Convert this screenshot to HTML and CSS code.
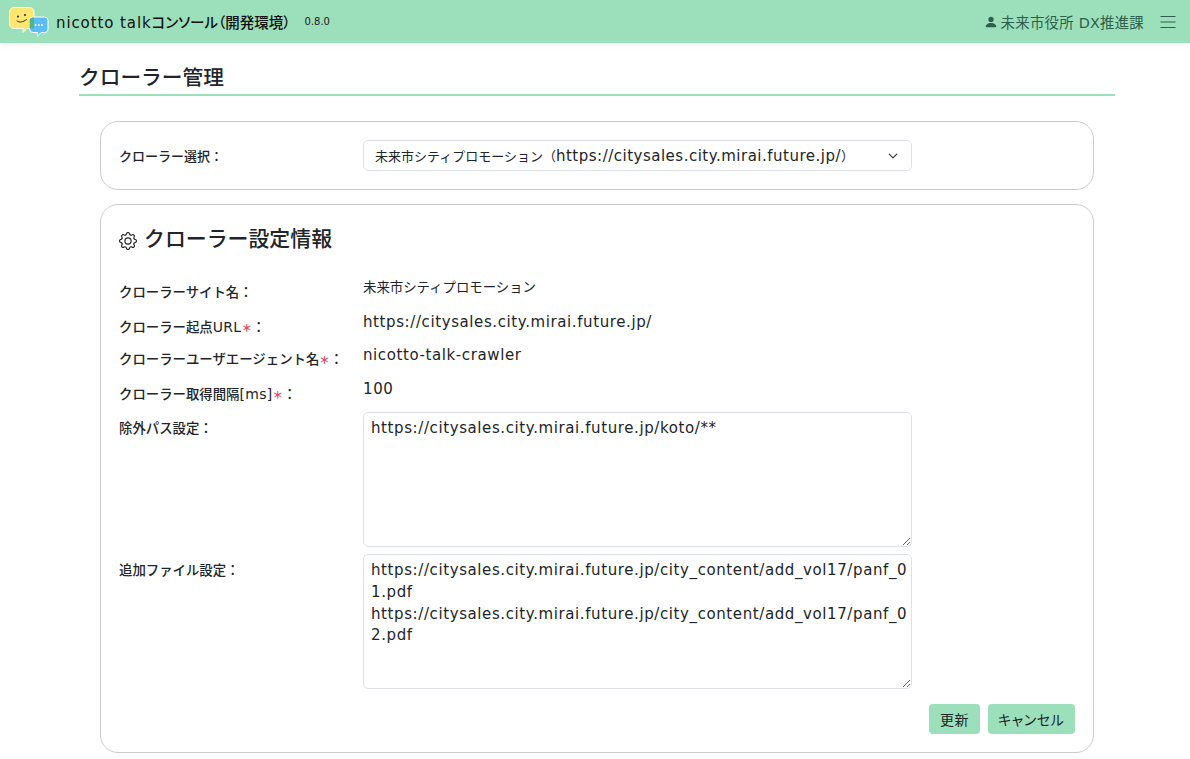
FILE: index.html
```html
<!DOCTYPE html>
<html lang="ja">
  <head>
    <meta charset="UTF-8" />
    <meta name="viewport" content="width=device-width, initial-scale=1.0" />
    <title>クローラー管理</title>
    <link rel="stylesheet" href="styles.css">
  </head>

  <body>
    <header class="navbar">
      <div class="brand">
        <svg class="logo" width="42" height="34" viewBox="8 4.500 42 34">
          <path d="M14 7h15.500a4.500 4.500 0 0 1 4.500 4.500v12a4.500 4.500 0 0 1-4.500 4.500H27l-4 4 .5-4H14a4.500 4.500 0 0 1-4.500-4.500v-12A4.500 4.500 0 0 1 14 7z" fill="#ffe66e" stroke="#fff" stroke-width="1"/>
          <path d="M33 16.500h11.500a3.500 3.500 0 0 1 3.500 3.500v8.500a3.500 3.500 0 0 1-3.500 3.500H41l-3.500 4 .2-4H33a3.500 3.500 0 0 1-3.500-3.500V20a3.500 3.500 0 0 1 3.500-3.500z" fill="#5cbdf5" stroke="#fff" stroke-width="1"/>
          <path d="M33 17H34v11h-4.500v-8a3.500 3.500 0 0 1 3.500-3z" fill="#4fb487"/>
          <circle cx="18" cy="16" r="1.100" fill="#333"/>
          <circle cx="25" cy="14.500" r="1.100" fill="#333"/>
          <path d="M17 20.500c2.500 1.800 6 1.300 9.500-1.500" fill="none" stroke="#333" stroke-width="1" stroke-linecap="round"/>
          <circle cx="35.500" cy="24.500" r=".9" fill="#fff"/>
          <circle cx="38.800" cy="24.500" r=".9" fill="#fff"/>
          <circle cx="42" cy="24.500" r=".9" fill="#fff"/>
        </svg>
        <span class="brand-name"><span class="brand-latin">nicotto talk</span>コンソール（開発環境）</span>
        <span class="version">0.8.0</span>
      </div>
      <div class="nav-right">
        <svg class="user-icon" width="14" height="14" viewBox="0 0 16 16" fill="#2f5f4c">
          <path d="M3 14s-1 0-1-1 1-4 6-4 6 3 6 4-1 1-1 1H3zm5-6a3 3 0 1 0 0-6 3 3 0 0 0 0 6z"/>
        </svg>
        <span class="org">未来市役所 DX推進課</span>
        <svg class="menu-icon" width="16" height="14" viewBox="0 0 16 14" stroke="#2f5f4c" stroke-width="1.200">
          <path d="M0.500 1.500h15M0.500 7h15M0.500 12.500h15"/>
        </svg>
      </div>
    </header>

    <main class="content">
      <h1 class="page-title">クローラー管理</h1>

      <section class="card select-card">
        <div class="row">
          <label class="field-label narrow">クローラー選択：</label>
          <div class="select">
            <span>未来市シティプロモーション（<span class="url">https://citysales.city.mirai.future.jp/</span>）</span>
            <svg width="10" height="10" viewBox="0 0 16 16" fill="none" stroke="#343a40" stroke-width="2" stroke-linecap="round" stroke-linejoin="round">
              <path d="M2 5l6 6 6-6"/>
            </svg>
          </div>
        </div>
      </section>

      <section class="card settings-card">
        <h2 class="card-title">
          <svg width="18" height="18" viewBox="0 0 16 16" fill="#222">
            <path d="M8 4.754a3.246 3.246 0 1 0 0 6.492 3.246 3.246 0 0 0 0-6.492zM5.754 8a2.246 2.246 0 1 1 4.492 0 2.246 2.246 0 0 1-4.492 0z"/>
            <path d="M9.796 1.343c-.527-1.79-3.065-1.79-3.592 0l-.094.319a.873.873 0 0 1-1.255.52l-.292-.16c-1.64-.892-3.433.902-2.54 2.541l.159.292a.873.873 0 0 1-.52 1.255l-.319.094c-1.79.527-1.79 3.065 0 3.592l.319.094a.873.873 0 0 1 .52 1.255l-.16.292c-.892 1.64.901 3.434 2.541 2.54l.292-.159a.873.873 0 0 1 1.255.52l.094.319c.527 1.79 3.065 1.79 3.592 0l.094-.319a.873.873 0 0 1 1.255-.52l.292.16c1.64.893 3.434-.902 2.54-2.541l-.159-.292a.873.873 0 0 1 .52-1.255l.319-.094c1.79-.527 1.79-3.065 0-3.592l-.319-.094a.873.873 0 0 1-.52-1.255l.16-.292c.893-1.64-.902-3.433-2.541-2.54l-.292.159a.873.873 0 0 1-1.255-.52l-.094-.319zm-2.633.283c.246-.835 1.428-.835 1.674 0l.094.319a1.873 1.873 0 0 0 2.693 1.115l.291-.16c.764-.415 1.6.42 1.184 1.185l-.159.292a1.873 1.873 0 0 0 1.116 2.692l.318.094c.835.246.835 1.428 0 1.674l-.319.094a1.873 1.873 0 0 0-1.115 2.693l.16.291c.415.764-.42 1.6-1.185 1.184l-.291-.159a1.873 1.873 0 0 0-2.693 1.116l-.094.318c-.246.835-1.428.835-1.674 0l-.094-.319a1.873 1.873 0 0 0-2.692-1.115l-.292.16c-.764.415-1.6-.42-1.184-1.185l.159-.291A1.873 1.873 0 0 0 1.945 8.930l-.319-.094c-.835-.246-.835-1.428 0-1.674l.319-.094A1.873 1.873 0 0 0 3.060 4.377l-.16-.292c-.415-.764.42-1.6 1.185-1.184l.292.159a1.873 1.873 0 0 0 2.692-1.115l.094-.319z"/>
          </svg>
          <span>クローラー設定情報</span>
        </h2>

        <div class="info-row">
          <label class="field-label">クローラーサイト名：</label>
          <div class="info-value small">未来市シティプロモーション</div>
        </div>
        <div class="info-row">
          <label class="field-label">クローラー起点<span class="label-latin">URL</span><span class="req">＊</span>：</label>
          <div class="info-value">https://citysales.city.mirai.future.jp/</div>
        </div>
        <div class="info-row">
          <label class="field-label">クローラーユーザエージェント名<span class="req">＊</span>：</label>
          <div class="info-value">nicotto-talk-crawler</div>
        </div>
        <div class="info-row">
          <label class="field-label">クローラー取得間隔<span class="label-latin">[ms]</span><span class="req">＊</span>：</label>
          <div class="info-value">100</div>
        </div>
        <div class="area-row">
          <label class="field-label">除外パス設定：</label>
          <textarea class="area" spellcheck="false">https://citysales.city.mirai.future.jp/koto/**</textarea>
        </div>
        <div class="area-row">
          <label class="field-label">追加ファイル設定：</label>
          <textarea class="area" spellcheck="false">https://citysales.city.mirai.future.jp/city_content/add_vol17/panf_01.pdf
https://citysales.city.mirai.future.jp/city_content/add_vol17/panf_02.pdf</textarea>
        </div>
        <div class="actions">
          <button class="btn">更新</button>
          <button class="btn">キャンセル</button>
        </div>
      </section>
    </main>
  </body>
</html>
```

FILE: styles.css
```css
* {
  box-sizing: border-box;
}
html, body {
  height: 759px;
  overflow: hidden;
}
body {
  margin: 0;
  background-color: white;
  color: #212529;
  font-family: "DejaVu Sans", "Noto Sans CJK JP", sans-serif;
  font-size: 14px;
}
.navbar {
  display: flex;
  justify-content: space-between;
  align-items: center;
  height: 43px;
  padding: 0 14px 0 8px;
  background-color: #9cdfbb;
  box-shadow: 0 2px 6px rgba(0, 0, 0, 0.06);
}
.brand {
  display: flex;
  align-items: center;
}
.brand-name {
  margin-left: 6px;
  font-size: 14.500px;
  font-weight: 500;
  font-feature-settings: "palt";
  color: #111;
}
.brand-latin {
  font-size: 15px;
  letter-spacing: 0.9px;
}
.version {
  margin-left: 14px;
  font-size: 10px;
  color: #222;
}
.nav-right {
  display: flex;
  align-items: center;
  color: #2f5f4c;
}
.org {
  margin-left: 3px;
  font-size: 14.400px;
  letter-spacing: 0.25px;
}
.menu-icon {
  margin-left: 16px;
}
.content {
  width: 1036px;
  margin-left: 79px;
  padding-top: 21px;
}
.page-title {
  margin: 0 0 25px;
  height: 32px;
  border-bottom: 2px solid #9cdfbb;
  font-size: 20.700px;
  font-weight: 500;
  line-height: 28px;
}
.card {
  width: 994px;
  margin-left: 21px;
  border: 1px solid #ccc;
  border-radius: 18px;
}
.select-card {
  height: 69px;
  padding: 18px;
}
.row {
  display: flex;
  align-items: center;
}
.field-label {
  display: block;
  width: 244px;
  flex: none;
  font-size: 13.400px;
  font-weight: 500;
  color: #212529;
}
.field-label.narrow {
  font-size: 13px;
}
.label-latin {
  font-size: 14px;
  letter-spacing: 0.3px;
}
.select {
  display: flex;
  justify-content: space-between;
  align-items: center;
  width: 549px;
  height: 31px;
  padding: 0 13px 0 11px;
  border: 1px solid #dee2e6;
  border-radius: 5px;
  font-size: 13px;
}
.url {
  font-size: 15px;
  letter-spacing: 0.5px;
}
.settings-card {
  height: 549px;
  margin-top: 14px;
  padding: 18px;
}
.card-title {
  display: flex;
  align-items: center;
  gap: 7px;
  margin: 0 0 32px;
  height: 28px;
  font-size: 20.900px;
  font-weight: 500;
}
.card-title svg {
  margin-top: 8px;
}
.info-row {
  display: flex;
  height: 33.600px;
  line-height: 20px;
}
.info-value {
  font-size: 15px;
  letter-spacing: 0.6px;
  margin-top: -5px;
}
.info-value.small {
  font-size: 13.400px;
  letter-spacing: 0;
}
.req {
  color: #e0485c;
  font-size: 10.500px;
  font-weight: 700;
}
.area-row {
  display: flex;
  height: 142px;
  margin-top: -5px;
  margin-bottom: 5px;
}
.area-row .field-label {
  margin-top: 5px;
}
.area {
  width: 549px;
  height: 135px;
  padding: 5px 2px 5px 7px;
  border: 1px solid #dee2e6;
  border-radius: 5px;
  color: #212529;
  font-family: inherit;
  font-size: 15px;
  letter-spacing: 0.6px;
  line-height: 21.600px;
  word-break: break-all;
  outline: none;
}
.actions {
  display: flex;
  justify-content: flex-end;
  gap: 8px;
  margin-top: 8px;
}
.btn {
  height: 30px;
  padding: 0 10.500px;
  border: none;
  border-radius: 4px;
  background-color: #9cdfbb;
  color: #212529;
  font-family: inherit;
  font-size: 14px;
  letter-spacing: 0.6px;
  font-feature-settings: "palt";
  cursor: pointer;
}
```
